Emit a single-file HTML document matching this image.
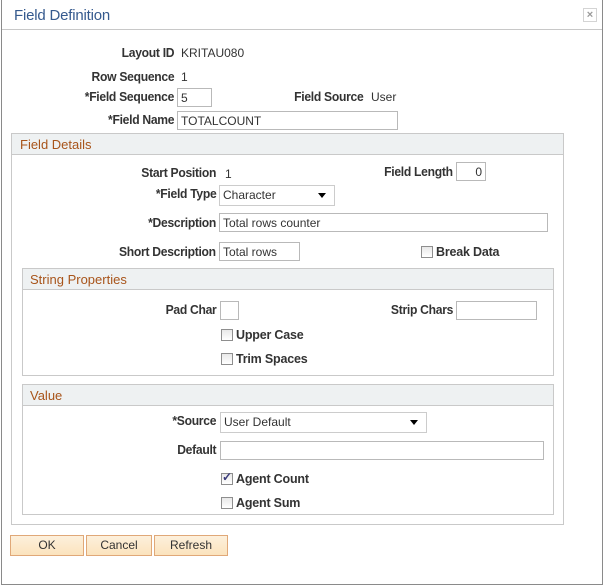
<!DOCTYPE html>
<html><head><meta charset="utf-8"><style>
*{box-sizing:border-box;margin:0;padding:0}
body{width:604px;height:586px;background:#fff;position:relative;overflow:hidden;font-family:"Liberation Sans",Arial,sans-serif;font-size:12px;color:#333}
.a{position:absolute}
.dlg{left:1px;top:0;width:602px;height:585px;border:1px solid #8a8a8a;border-top:none;background:#fff}
.lbl{position:absolute;font-weight:bold;color:#333;text-align:right;white-space:nowrap;font-size:12.5px;letter-spacing:-0.3px;transform-origin:right center;transform:scaleX(.97)}
.val{position:absolute;color:#333;white-space:nowrap}
.inp{position:absolute;border:1px solid #b9b9b9;background:#fff;height:19px;padding:1px 3px;font-size:12px;color:#333;line-height:16px;white-space:nowrap}
.box{position:absolute;border:1px solid #c9c9c9}
.hdr{position:absolute;left:0;top:0;right:0;height:21px;background:#eef1f2;border-bottom:1px solid #c9c9c9;color:#a8541a;font-size:13px;padding:3px 0 0 7px}
.cb{position:absolute;width:12px;height:12px;border:1px solid #8e8e8e;background:linear-gradient(#e8e8e8,#fff)}
.cbl{position:absolute;font-weight:bold;white-space:nowrap;font-size:12.5px;letter-spacing:-0.2px}
.btn{position:absolute;top:535px;height:21px;border:1px solid #e0a878;background:linear-gradient(#fdf0dc,#fbe3bd);text-align:center;font-size:12px;line-height:19px;color:#333}
.sel:after{content:"";position:absolute;right:8px;top:7px;border-left:4px solid transparent;border-right:4px solid transparent;border-top:5px solid #000}
</style></head><body>
<div class="a dlg"></div>
<div class="a" style="left:14px;top:7px;font-size:15px;color:#365a8e;letter-spacing:-0.2px">Field Definition</div>
<div class="a" style="left:2px;top:29px;width:600px;height:1px;background:#c8c8c8"></div>
<div class="a" style="left:583px;top:8px;width:14px;height:14px;border:1px solid #d4d4d4;color:#999;font-size:11px;line-height:12px;text-align:center;font-weight:bold">×</div>

<div class="lbl" style="right:430px;top:46px">Layout ID</div><div class="val" style="left:181px;top:46px">KRITAU080</div>
<div class="lbl" style="right:430px;top:70px">Row Sequence</div><div class="val" style="left:181px;top:70px">1</div>
<div class="lbl" style="right:430px;top:90px">*Field Sequence</div><div class="inp" style="left:177px;top:88px;width:35px">5</div>
<div class="lbl" style="right:241px;top:90px">Field Source</div><div class="val" style="left:371px;top:90px">User</div>
<div class="lbl" style="right:430px;top:113px">*Field Name</div><div class="inp" style="left:177px;top:111px;width:221px">TOTALCOUNT</div>

<div class="box" style="left:11px;top:133px;width:553px;height:392px"><div class="hdr" style="padding-left:8px">Field Details</div></div>

<div class="lbl" style="right:388px;top:166px">Start Position</div><div class="val" style="left:225px;top:167px">1</div>
<div class="lbl" style="right:151px;top:165px">Field Length</div><div class="inp" style="left:456px;top:162px;width:30px;text-align:right">0</div>
<div class="lbl" style="right:388px;top:187px">*Field Type</div><div class="inp sel" style="left:219px;top:185px;width:116px;height:21px;border-color:#ccc">Character</div>
<div class="lbl" style="right:388px;top:216px">*Description</div><div class="inp" style="left:219px;top:213px;width:329px">Total rows counter</div>
<div class="lbl" style="right:388px;top:245px">Short Description</div><div class="inp" style="left:219px;top:242px;width:81px">Total rows</div>
<div class="cb" style="left:421px;top:246px"></div><div class="cbl" style="left:436px;top:245px">Break Data</div>

<div class="box" style="left:22px;top:268px;width:532px;height:108px"><div class="hdr">String Properties</div></div>
<div class="lbl" style="right:388px;top:303px">Pad Char</div><div class="inp" style="left:220px;top:301px;width:19px"></div>
<div class="lbl" style="right:151px;top:303px">Strip Chars</div><div class="inp" style="left:456px;top:301px;width:81px"></div>
<div class="cb" style="left:221px;top:329px"></div><div class="cbl" style="left:236px;top:328px">Upper Case</div>
<div class="cb" style="left:221px;top:353px"></div><div class="cbl" style="left:236px;top:352px">Trim Spaces</div>

<div class="box" style="left:22px;top:384px;width:532px;height:131px"><div class="hdr">Value</div></div>
<div class="lbl" style="right:388px;top:414px">*Source</div><div class="inp sel" style="left:220px;top:412px;width:207px;height:21px;border-color:#ccc">User Default</div>
<div class="lbl" style="right:388px;top:443px">Default</div><div class="inp" style="left:220px;top:441px;width:324px"></div>
<div class="cb" style="left:221px;top:473px"><span style="position:absolute;left:0;top:-4px;font-size:12px;color:#3a3a7a;font-weight:bold">✓</span></div><div class="cbl" style="left:236px;top:472px">Agent Count</div>
<div class="cb" style="left:221px;top:497px"></div><div class="cbl" style="left:236px;top:496px">Agent Sum</div>

<div class="btn" style="left:10px;width:74px">OK</div>
<div class="btn" style="left:86px;width:66px">Cancel</div>
<div class="btn" style="left:154px;width:74px">Refresh</div>
</body></html>
